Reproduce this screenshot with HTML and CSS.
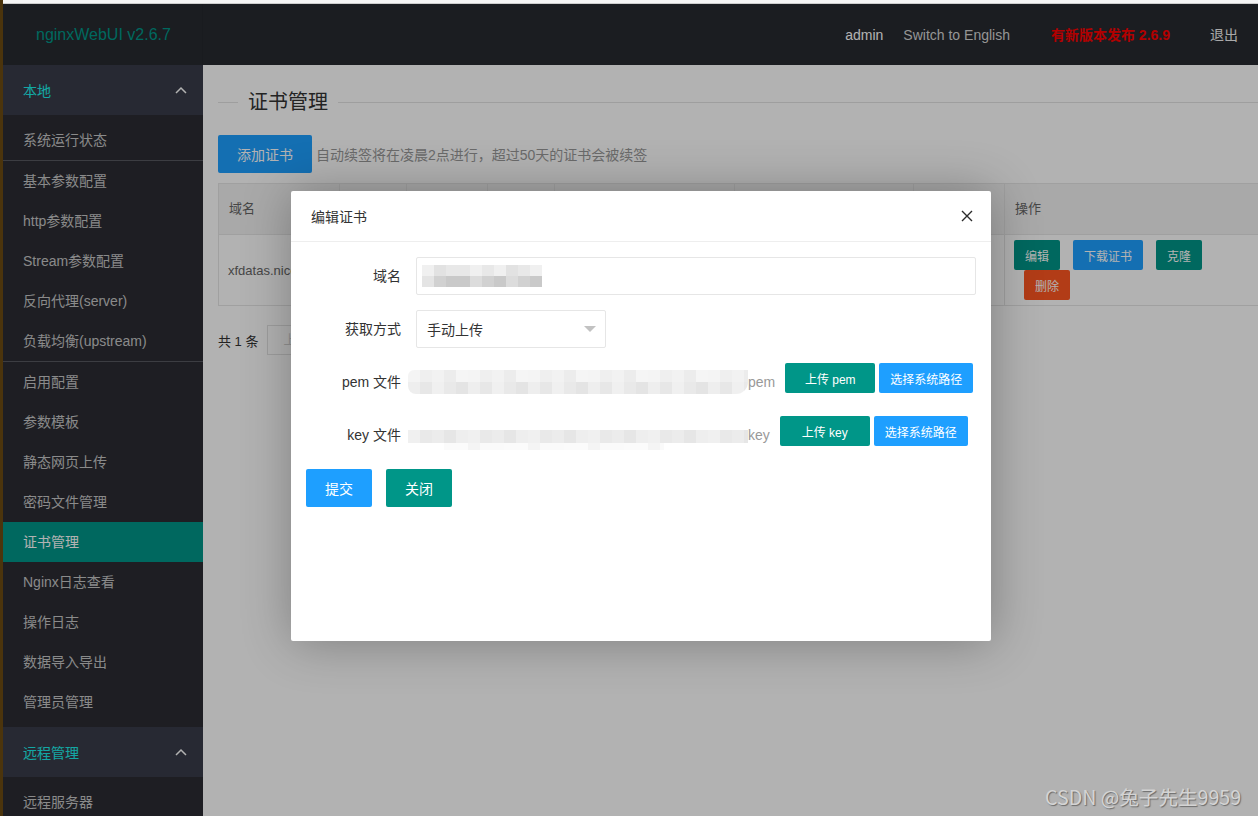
FILE: index.html
```html
<!DOCTYPE html>
<html lang="zh">
<head>
<meta charset="utf-8">
<title>nginxWebUI</title>
<link rel="stylesheet" href="styles.css">
</head>
<body>
<div class="edge"></div>
<div class="screen">
  <div class="topstrip"></div>
  <div class="viewport">
    <header class="header">
      <div class="logo">nginxWebUI v2.6.7</div>
      <ul class="nav-right">
        <li class="nav-admin">admin</li>
        <li class="nav-switch">Switch to English</li>
        <li class="nav-new">有新版本发布 2.6.9</li>
        <li class="nav-logout">退出</li>
      </ul>
    </header>
    <div class="body">
      <aside class="side">
        <div class="group-title"><span>本地</span>
          <svg class="chev" width="12" height="8" viewBox="0 0 12 8"><polyline points="1,7 6,2 11,7" fill="none" stroke="#fff" stroke-width="1.5"/></svg>
        </div>
        <div class="group-child">
          <div class="item">系统运行状态</div>
          <div class="sep"></div>
          <div class="item">基本参数配置</div>
          <div class="item">http参数配置</div>
          <div class="item">Stream参数配置</div>
          <div class="item">反向代理(server)</div>
          <div class="item">负载均衡(upstream)</div>
          <div class="sep"></div>
          <div class="item">启用配置</div>
          <div class="item">参数模板</div>
          <div class="item">静态网页上传</div>
          <div class="item">密码文件管理</div>
          <div class="item active">证书管理</div>
          <div class="item">Nginx日志查看</div>
          <div class="item">操作日志</div>
          <div class="item">数据导入导出</div>
          <div class="item">管理员管理</div>
        </div>
        <div class="group-title"><span>远程管理</span>
          <svg class="chev" width="12" height="8" viewBox="0 0 12 8"><polyline points="1,7 6,2 11,7" fill="none" stroke="#fff" stroke-width="1.5"/></svg>
        </div>
        <div class="group-child">
          <div class="item">远程服务器</div>
        </div>
      </aside>
      <main class="main">
        <div class="legend"><span>证书管理</span></div>
        <div class="toolbar">
          <button class="btn btn-blue btn-lg">添加证书</button>
          <span class="hint">自动续签将在凌晨2点进行，超过50天的证书会被续签</span>
        </div>
        <table class="table">
          <colgroup>
            <col class="c1"><col class="c2"><col class="c3"><col class="c4"><col class="c5"><col class="c6"><col class="c7"><col class="c8">
          </colgroup>
          <thead>
            <tr><th>域名</th><th></th><th></th><th></th><th></th><th></th><th></th><th>操作</th></tr>
          </thead>
          <tbody>
            <tr>
              <td>xfdatas.nice</td><td></td><td></td><td></td><td></td><td></td><td></td>
              <td>
                <div class="ops">
                  <button class="btn btn-sm btn-teal">编辑</button>
                  <button class="btn btn-sm btn-blue op">下载证书</button>
                  <button class="btn btn-sm btn-teal op">克隆</button>
                  <button class="btn btn-sm btn-red op-del">删除</button>
                </div>
              </td>
            </tr>
          </tbody>
        </table>
        <div class="pager">
          <span class="count">共 1 条</span>
          <span class="page-prev">上</span>
        </div>
      </main>
    </div>
    <div class="shade"></div>
    <div class="layer">
      <div class="layer-title">
        <span>编辑证书</span>
        <svg class="close" width="12" height="12" viewBox="0 0 12 12"><path d="M1 1L11 11M11 1L1 11" stroke="#2b2b2b" stroke-width="1.4" fill="none"/></svg>
      </div>
      <div class="layer-content">
        <div class="form-item">
          <label class="label">域名</label>
          <div class="input">
            <div class="mosaic">
              <span class="m a1"></span><span class="m a3"></span><span class="m a2"></span><span class="m a2"></span><span class="m a1"></span><span class="m a2"></span><span class="m a1"></span><span class="m a3"></span><span class="m a2"></span><span class="m a1"></span>
              <span class="m b1"></span><span class="m b3"></span><span class="m b4"></span><span class="m b4"></span><span class="m b2"></span><span class="m b3"></span><span class="m b4"></span><span class="m b2"></span><span class="m b3"></span><span class="m b4"></span>
            </div>
          </div>
        </div>
        <div class="form-item">
          <label class="label">获取方式</label>
          <div class="select"><span>手动上传</span><i class="caret"></i></div>
        </div>
        <div class="form-item">
          <label class="label">pem 文件</label>
          <div class="file-mosaic pem-mosaic"><div class="row r1"></div><div class="row r2"></div></div>
          <span class="ext">pem</span>
          <div class="btn-group">
            <button class="btn btn-sm btn-teal up">上传 pem</button>
            <button class="btn btn-sm btn-blue sys">选择系统路径</button>
          </div>
        </div>
        <div class="form-item">
          <label class="label">key 文件</label>
          <div class="file-mosaic key-mosaic"><div class="row k1"></div><div class="row k2"></div></div>
          <span class="ext">key</span>
          <div class="btn-group">
            <button class="btn btn-sm btn-teal up">上传 key</button>
            <button class="btn btn-sm btn-blue sys">选择系统路径</button>
          </div>
        </div>
        <div class="form-actions">
          <button class="btn btn-lg btn-blue">提交</button>
          <button class="btn btn-lg btn-teal">关闭</button>
        </div>
      </div>
    </div>
    <div class="watermark">CSDN @兔子先生9959</div>
  </div>
</div>
</body>
</html>
```

FILE: styles.css
```css
* { box-sizing: border-box; margin: 0; padding: 0; }
html, body { width: 1258px; height: 816px; overflow: hidden; }
body {
  display: flex;
  font-family: "Liberation Sans", "Noto Sans CJK SC", sans-serif;
  font-size: 14px;
  color: #333;
  background: #f4f4f4;
}
.edge { width: 3px; flex: none; background: #4b340c; }
.screen { flex: 1; display: flex; flex-direction: column; min-width: 0; }
.topstrip { height: 4px; flex: none; background: #f5f5f5; border-bottom: 1px solid #cdcdcd; }
.viewport { position: relative; flex: 1; display: flex; flex-direction: column; overflow: hidden; background: #fff; }

/* header */
.header { height: 61px; flex: none; display: flex; align-items: center; background: #272a30; }
.logo { width: 200px; height: 61px; line-height: 62px; padding-left: 33px; font-size: 16px; color: #009688; border-right: 1px solid #24272d; }
.nav-right { margin-left: auto; display: flex; list-style: none; padding-right: 20px; font-size: 14px; line-height: 62px; }
.nav-admin { color: #fff; }
.nav-switch { margin-left: 20px; color: #d6d6d6; }
.nav-new { margin-left: 41px; color: #ff0000; font-weight: bold; }
.nav-logout { margin-left: 40px; color: #f2f2f2; }

/* layout */
.body { flex: 1; display: flex; min-height: 0; }
.side { width: 200px; flex: none; background: #2b2c33; }
.group-title { height: 50px; display: flex; align-items: center; justify-content: space-between; padding: 0 16px 0 20px; background: #393c49; color: #1cf0ec; }
.group-child { padding: 5px 0; }
.item { height: 40px; line-height: 40px; padding-left: 20px; color: #c6c6c6; white-space: nowrap; }
.item.active { background: #009688; color: #fff; }
.sep { height: 1px; background: #56585f; }

/* main */
.main { flex: 1; min-width: 0; padding: 23px 0 0 15px; background: #fff; overflow: hidden; }
.legend { display: flex; align-items: center; height: 28px; }
.legend::before { content: ""; width: 20px; height: 1px; background: #e2e2e2; }
.legend::after { content: ""; flex: 1; height: 1px; background: #e2e2e2; }
.legend span { padding: 0 10px; font-size: 20px; line-height: 28px; color: #333; }
.toolbar { display: flex; align-items: center; margin-top: 19px; }
.hint { margin-left: 4px; color: #999; font-size: 14px; }

.btn { border: none; border-radius: 2px; color: #fff; font-family: inherit; white-space: nowrap; display: inline-flex; align-items: center; justify-content: center; }
.btn-lg { height: 38px; padding: 0 19px; font-size: 14px; }
.btn-sm { height: 30px; padding: 0 11px; font-size: 12px; }
.btn-blue { background: #1e9fff; }
.btn-teal { background: #009688; }
.btn-red { background: #ff5722; }

.table { margin-top: 10px; width: 1040px; border-collapse: collapse; table-layout: fixed; font-size: 13px; color: #666; }
.c1 { width: 121px; } .c2 { width: 67px; } .c3 { width: 81px; } .c4 { width: 67px; }
.c5 { width: 180px; } .c6 { width: 179px; } .c7 { width: 91px; } .c8 { width: 254px; }
.table th, .table td { border: 1px solid #e6e6e6; text-align: left; font-weight: normal; padding: 0 10px; white-space: nowrap; overflow: hidden; }
.table th { height: 51px; padding-bottom: 3px; background: #f2f2f2; }
.table td { height: 71px; padding: 5px 15px 5px 9px; }
.ops { display: flex; flex-wrap: wrap; }
.ops .op { margin-left: 13px; }
.ops .op-del { margin-left: 10px; }

.pager { display: flex; align-items: center; margin-top: 19px; font-size: 13px; }
.count { color: #333; margin-right: 9px; }
.page-prev { height: 30px; line-height: 28px; padding: 0 40px 0 15px; border: 1px solid #e2e2e2; color: #d2d2d2; }

/* modal */
.shade { position: absolute; inset: 0; background: rgba(0, 0, 0, 0.3); z-index: 2; }
.layer { position: absolute; left: 288px; top: 187px; width: 700px; height: 450px; background: #fff; border-radius: 2px; box-shadow: 1px 1px 50px rgba(0, 0, 0, 0.3); z-index: 3; font-family: "Liberation Sans", "Noto Sans CJK SC", sans-serif; }
.layer-title { height: 51px; display: flex; align-items: center; justify-content: space-between; padding: 0 18px 0 20px; border-bottom: 1px solid #eee; font-size: 14px; color: #333; }
.layer-content { padding: 15px; }
.form-item { display: flex; height: 38px; margin-bottom: 15px; }
.label { width: 110px; flex: none; padding-right: 15px; text-align: right; line-height: 38px; color: #333; }
.input { flex: 1; height: 38px; border: 1px solid #e6e6e6; border-radius: 2px; display: flex; align-items: center; padding-left: 5px; }
.mosaic { display: grid; grid-template-columns: repeat(10, 12px); grid-auto-rows: 11px; }
.m { display: block; }
.a1 { background: #f0f0f0; } .a2 { background: #e8e8e8; } .a3 { background: #e2e2e2; }
.b1 { background: #e4e4e4; } .b2 { background: #dcdcdc; } .b3 { background: #d1d1d1; } .b4 { background: #c9c9c9; }
.select { width: 190px; height: 38px; border: 1px solid #e6e6e6; border-radius: 2px; display: flex; align-items: center; justify-content: space-between; padding: 0 9px 0 10px; color: #333; }
.caret { width: 0; height: 0; border-style: solid; border-width: 6px 6px 0 6px; border-color: #c2c2c2 transparent transparent transparent; }

.file-mosaic { width: 340px; margin-left: -8px; display: flex; flex-direction: column; }
.pem-mosaic { margin-top: 7px; }
.pem-mosaic .row { height: 12px; }
.r1 { border-radius: 6px 0 0 0; background: repeating-linear-gradient(90deg, #f4f4f4 0 12px, #efefef 12px 24px, #f2f2f2 24px 36px, #ececec 36px 48px, #f5f5f5 48px 60px); }
.r2 { height: 13px; border-radius: 0 0 12px 8px; background: repeating-linear-gradient(90deg, #eeeeee 0 12px, #e7e7e7 12px 24px, #f0f0f0 24px 36px, #e9e9e9 36px 48px, #e4e4e4 48px 60px); }
.key-mosaic { margin-top: 14px; }
.k1 { height: 13px; background: repeating-linear-gradient(90deg, #f0f0f0 0 12px, #e9e9e9 12px 24px, #ececec 24px 36px, #e6e6e6 36px 48px, #eeeeee 48px 60px); }
.k2 { height: 7px; margin-left: 36px; width: 220px; background: repeating-linear-gradient(90deg, #fbfbfb 0 24px, #f4f4f4 24px 36px, #fafafa 36px 60px); }
.ext { line-height: 38px; color: #999; }
.btn-group { display: flex; margin-left: 10px; }
.btn-group .up { width: 90px; padding: 0; }
.btn-group .sys { width: 94px; padding: 0; margin-left: 4px; }
.form-actions { display: flex; }
.form-actions .btn + .btn { margin-left: 14px; }

.watermark { position: absolute; left: 1042px; top: 780px; z-index: 4; font-family: "Noto Sans CJK SC", sans-serif; font-size: 19.6px; line-height: 26px; color: #d4d4d4; text-shadow: 1px 1px 1px rgba(60, 60, 60, 0.6); white-space: nowrap; }
```
